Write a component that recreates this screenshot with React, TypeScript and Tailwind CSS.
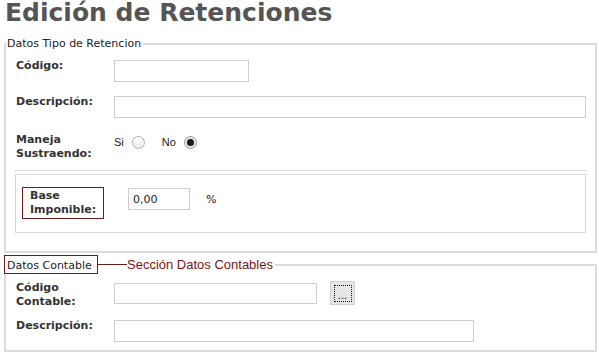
import React from "react";

const label = "text-[11px] leading-[14px] font-bold text-[#333]";
const input =
  "block h-[22px] border border-[#cfcfcf] bg-white px-[4px] text-[11px] text-[#222] outline-none font-['DejaVu_Sans',sans-serif]";

function Radio({ checked }: { checked?: boolean }) {
  if (checked) {
    return (
      <span className="flex h-[13px] w-[13px] items-center justify-center rounded-full border border-[#9a9a9a] bg-[#e6e6e6]">
        <span className="h-[7px] w-[7px] rounded-full bg-[#1a1a1a]" />
      </span>
    );
  }
  return <span className="block h-[13px] w-[13px] rounded-full border border-[#b0b0b0] bg-gradient-to-b from-white to-[#ececec]" />;
}

export default function App() {
  return (
    <div className="h-[355px] w-[599px] overflow-hidden bg-white font-['DejaVu_Sans',sans-serif]">
      <h1 className="pl-[5px] text-[25px] font-bold leading-[25px] text-[#555]">Edición de Retenciones</h1>

      <fieldset className="ml-[4px] mt-[12px] w-[593px] border-2 border-[#dcdcdc]">
        <legend className="pl-[1px] pr-[2px] text-[11px] leading-[13px] text-[#222]">Datos Tipo de Retencion</legend>
        <div className="px-[9px] pb-[18px] pt-[9px]">
          <div className="flex items-start">
            <div className={`w-[99px] pl-[1px] ${label}`}>Código:</div>
            <input className={`${input} mt-[1px] w-[135px]`} defaultValue="" />
          </div>
          <div className="mt-[13px] flex items-start">
            <div className={`w-[99px] pl-[1px] ${label}`}>Descripción:</div>
            <input className={`${input} mt-[1px] w-[472px]`} defaultValue="" />
          </div>
          <div className="mt-[15px] flex items-start">
            <div className={`w-[99px] pl-[1px] ${label}`}>
              Maneja
              <br />
              Sustraendo:
            </div>
            <div className="mt-[1px] flex items-center font-['Liberation_Sans',sans-serif] text-[11px] text-[#222]">
              <span>Si</span>
              <span className="ml-[8px]">
                <Radio />
              </span>
              <span className="ml-[17px]">No</span>
              <span className="ml-[8px]">
                <Radio checked />
              </span>
            </div>
          </div>
          <div className="mt-[9px] h-px bg-[#dcdcdc]" />
          <div className="mt-[3px] border border-[#d8d8d8] pb-[13px] pt-[12px]">
            <div className="flex items-start">
              <div className={`ml-[6px] w-[82px] border border-[#6e1a1a] py-[1px] pl-[7px] ${label}`}>
                Base
                <br />
                Imponible:
              </div>
              <input className={`${input} ml-[24px] mt-[1px] w-[62px]`} defaultValue="0,00" />
              <span className="ml-[16px] mt-[6px] text-[11px] leading-[13px] text-[#222]">%</span>
            </div>
          </div>
        </div>
      </fieldset>

      <fieldset className="ml-[4px] mt-[2px] w-[593px] border-2 border-[#dcdcdc]">
        <legend className="-ml-[2px] pr-[2px]">
          <div className="flex items-center">
            <span className="w-[94px] border border-[#6e1a1a] pb-[1px] pl-[2px] pt-[3px] text-[11px] leading-[13px] text-[#222]">
              Datos Contable
            </span>
            <span className="h-px w-[29px] bg-[#6e1a1a]" />
            <span className="font-['Liberation_Sans',sans-serif] text-[13px] leading-[15px] text-[#7b1616]">
              Sección Datos Contables
            </span>
          </div>
        </legend>
        <div className="px-[9px] pb-[8px] pt-[7px]">
          <div className="flex items-start">
            <div className={`w-[99px] pl-[1px] ${label}`}>
              Código
              <br />
              Contable:
            </div>
            <input className={`${input} mt-[2px] !h-[21px] w-[203px]`} defaultValue="" />
            <button className="ml-[13px] flex h-[24px] w-[25px] items-center justify-center border border-[#d0d0d0] bg-[#e6e6e6]">
              <span className="flex h-[17px] w-[18px] items-end justify-center border border-dotted border-[#111] text-[10px] leading-[10px] text-[#222]">
                ...
              </span>
            </button>
          </div>
          <div className="mt-[10px] flex items-start">
            <div className={`w-[99px] pl-[1px] ${label}`}>Descripción:</div>
            <input className={`${input} mt-[1px] w-[360px]`} defaultValue="" />
          </div>
        </div>
      </fieldset>
    </div>
  );
}
